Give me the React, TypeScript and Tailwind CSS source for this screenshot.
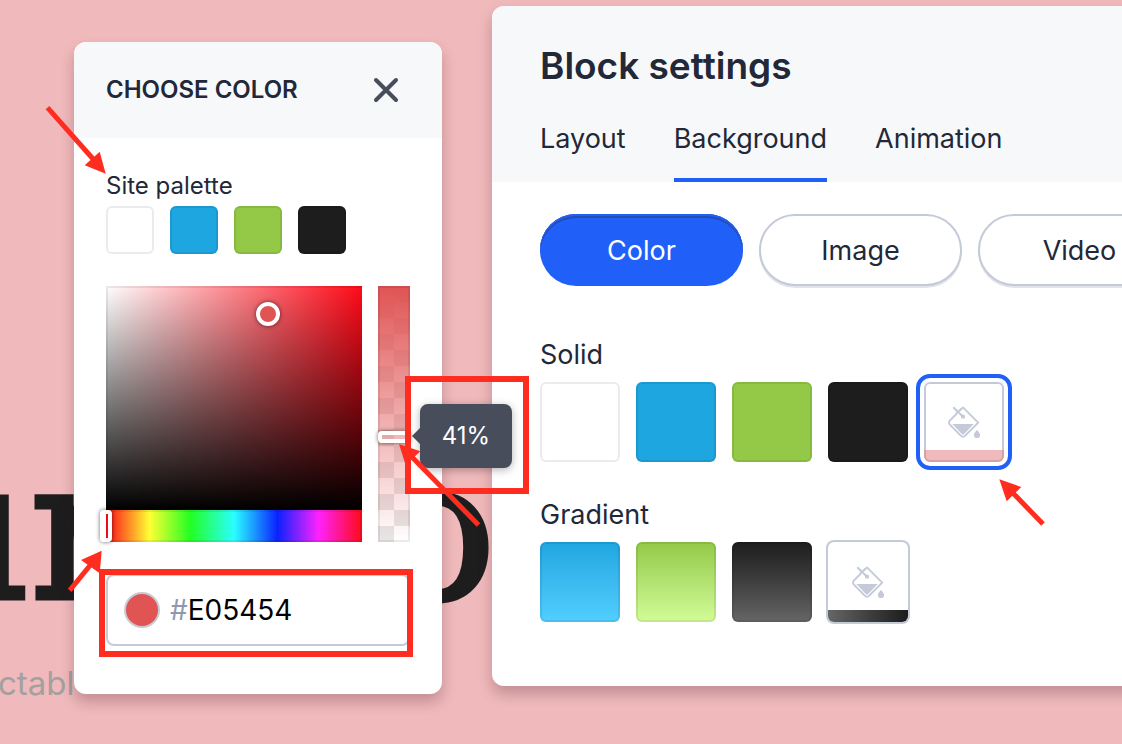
import { useState } from "react";

type Swatch = { name: string; fill: string };

const solids: Swatch[] = [
  { name: "White", fill: "bg-white" },
  { name: "Blue", fill: "bg-[#1ea6e0]" },
  { name: "Green", fill: "bg-[#93c947]" },
  { name: "Black", fill: "bg-[#1d1d1d]" },
];

const gradients: Swatch[] = [
  { name: "Blue gradient", fill: "bg-linear-to-b from-[#1ea6e0] to-[#52ceff]" },
  { name: "Green gradient", fill: "bg-linear-to-b from-[#93c947] to-[#d3fc97]" },
  { name: "Black gradient", fill: "bg-linear-to-b from-[#1d1d1d] to-[#666666]" },
];

const tabs = ["Layout", "Background", "Animation"];
const kinds = ["Color", "Image", "Video"];

function SwatchButton({ swatch, size }: { swatch: Swatch; size: string }) {
  return (
    <button
      type="button"
      aria-label={swatch.name}
      className={`shrink-0 rounded-md inset-ring-2 inset-ring-black/8 ${size} ${swatch.fill}`}
    />
  );
}

function BucketIcon() {
  return (
    <svg viewBox="0 0 34 34" className="size-[34px]" fill="none" aria-hidden="true">
      <path
        d="M16 2.4 31.2 17.6 18 30.9a2.8 2.8 0 0 1-4 0L2.9 19.700a2.900 2.900 0 0 1 0-4.200Z"
        stroke="#c4cad8"
        strokeWidth="1.9"
        strokeLinejoin="round"
      />
      <path d="M5.300 19h21.400L17.200 28.900a1.700 1.700 0 0 1-2.400 0Z" fill="#c4cad8" />
      <path d="M10.500 6.300 14.500 10.200" stroke="#fff" strokeWidth="3.600" />
      <path d="M8.800 8.500 14.500 3.800" stroke="#c4cad8" strokeWidth="1.900" />
      <path d="M6.300 2.300 16 11.700" stroke="#c4cad8" strokeWidth="2" />
      <circle cx="16" cy="11.700" r="2.100" fill="#c4cad8" />
      <path
        d="M30 24.800c1.600 2 3.100 3.500 3.100 5.200a3.100 3.100 0 0 1-6.200 0c0-1.700 1.500-3.200 3.100-5.200Z"
        fill="#c4cad8"
      />
    </svg>
  );
}

function BlockSettings() {
  const [tab, setTab] = useState("Background");
  const [kind, setKind] = useState("Color");
  return (
    <section className="mt-1.5 -mr-5 min-w-0 flex-1 overflow-hidden rounded-l-xl bg-white pb-16 shadow-[0_8px_14px_rgba(60,20,30,0.25)]">
      <header className="bg-[#f7f8fa] px-12 pt-9">
        <h2 className="text-[37px] leading-[48px] font-semibold whitespace-nowrap">Block settings</h2>
        <nav className="mt-[29px] flex gap-12">
          {tabs.map((t) => (
            <button
              key={t}
              type="button"
              onClick={() => setTab(t)}
              className={`border-b-4 pb-[19px] text-[27px] leading-10 ${
                t === tab ? "border-[#2060f8]" : "border-transparent"
              }`}
            >
              {t}
            </button>
          ))}
        </nav>
      </header>
      <div className="px-12 pt-8">
        <div className="flex gap-4">
          {kinds.map((k) => (
            <button
              key={k}
              type="button"
              onClick={() => setKind(k)}
              className={`h-18 w-[203px] shrink-0 rounded-full pt-0.5 text-[27px] ${
                k === kind
                  ? "bg-[#2060f8] text-white shadow-[inset_0_2px_0_#2060f8,inset_0_4px_0_#254cb0]"
                  : "border-2 border-[#c4cad8] bg-white shadow-[0_2px_0_#e2e4e8]"
              }`}
            >
              {k}
            </button>
          ))}
        </div>
        <h3 className="mt-[51px] text-[27px] leading-9">Solid</h3>
        <div className="mt-[9px] flex gap-4">
          {solids.map((s) => (
            <SwatchButton key={s.name} swatch={s} size="size-20" />
          ))}
          <button
            type="button"
            aria-label="Custom color"
            className="relative flex size-20 shrink-0 flex-col items-center justify-between overflow-hidden rounded-md bg-white inset-ring-2 inset-ring-[#c4cad8] outline-4 outline-offset-4 outline-[#2060f8]"
          >
            <span className="pt-[23px]">
              <BucketIcon />
            </span>
            <span className="h-3 w-full rounded-b-md border-x-2 border-b-2 border-black/12 bg-[#f0b9bb]" />
          </button>
        </div>
        <h3 className="mt-[35px] text-[27px] leading-9">Gradient</h3>
        <div className="mt-[9px] flex gap-4">
          {gradients.map((s) => (
            <SwatchButton key={s.name} swatch={s} size="size-20" />
          ))}
          <button
            type="button"
            aria-label="Custom gradient"
            className="flex size-20 shrink-0 flex-col items-center justify-between overflow-hidden rounded-md bg-white ring-2 ring-[#c4cad8]"
          >
            <span className="pt-[23px]">
              <BucketIcon />
            </span>
            <span className="h-3 w-full bg-linear-to-r from-[#666666] to-[#1d1d1d]" />
          </button>
        </div>
      </div>
    </section>
  );
}

function ColorPicker() {
  const [hex, setHex] = useState("E05454");
  const [hue, setHue] = useState(0);
  const [alpha, setAlpha] = useState(41);
  return (
    <section className="relative mt-[42px] w-[368px] shrink-0 rounded-xl bg-white pb-12 shadow-[0_8px_14px_rgba(60,20,30,0.25)]">
      <header className="flex h-24 items-center justify-between rounded-t-xl bg-[#f7f8fa] pr-[42px] pl-8">
        <h2 className="text-2xl font-semibold">CHOOSE COLOR</h2>
        <button type="button" aria-label="Close">
          <svg viewBox="0 0 28 28" className="size-7" aria-hidden="true">
            <path d="M4 4 24 24M24 4 4 24" stroke="#484d5c" strokeWidth="4" strokeLinecap="round" />
          </svg>
        </button>
      </header>
      <div className="px-8 pt-8">
        <h3 className="text-2xl leading-8">Site palette</h3>
        <div className="mt-1 flex gap-4">
          {solids.map((s) => (
            <SwatchButton key={s.name} swatch={s} size="size-12" />
          ))}
        </div>
        <div className="mt-8 flex gap-4">
          <div className="min-w-0 flex-1">
            <div
              role="slider"
              tabIndex={0}
              aria-label="Saturation and brightness"
              aria-valuenow={63}
              className="relative h-56 bg-[linear-gradient(to_top,#000,transparent),linear-gradient(to_right,#fff,#ff0a18)] shadow-[inset_2px_2px_0_rgba(0,0,0,0.08)]"
            >
              <span className="absolute top-4 left-[150px] size-6 rounded-full border-4 border-white bg-[#e05454] shadow-[0_0_4px_rgba(0,0,0,0.6)]" />
            </div>
            <div className="h-8 bg-[linear-gradient(to_right,#ff0a18,#ffff33_17%,#22ff22_33%,#2affff_50%,#0a22ff_67%,#ff22ff_83%,#ff0a18)] inset-ring-2 inset-ring-black/8">
              <input
                type="range"
                aria-label="Hue"
                min={0}
                max={360}
                value={hue}
                onChange={(e) => setHue(Number(e.target.value))}
                className="-ml-1.5 block h-8 w-[calc(100%+12px)] appearance-none bg-transparent [&::-webkit-slider-thumb]:h-8 [&::-webkit-slider-thumb]:w-3 [&::-webkit-slider-thumb]:appearance-none [&::-webkit-slider-thumb]:rounded-sm [&::-webkit-slider-thumb]:border-4 [&::-webkit-slider-thumb]:border-white [&::-webkit-slider-thumb]:shadow-[0_0_4px_rgba(0,0,0,0.6)]"
              />
            </div>
          </div>
          <div className="relative flex h-64 w-8 flex-col bg-[linear-gradient(to_bottom,#e05454,transparent),repeating-conic-gradient(#e6e6e6_0_25%,#fff_0_50%)] bg-size-[100%_100%,32px_32px] inset-ring-2 inset-ring-black/8">
            <input
              type="range"
              aria-label="Opacity"
              min={0}
              max={100}
              value={alpha}
              onChange={(e) => setAlpha(Number(e.target.value))}
              className="-mt-1.5 block h-[calc(100%+12px)] w-8 shrink-0 appearance-none bg-transparent [direction:rtl] [writing-mode:vertical-lr] [&::-webkit-slider-thumb]:h-3 [&::-webkit-slider-thumb]:w-8 [&::-webkit-slider-thumb]:appearance-none [&::-webkit-slider-thumb]:rounded-sm [&::-webkit-slider-thumb]:border-4 [&::-webkit-slider-thumb]:border-white [&::-webkit-slider-thumb]:shadow-[0_0_4px_rgba(0,0,0,0.6)]"
            />
            <output className="absolute top-[118px] left-[42px] z-10 flex h-16 w-[92px] items-center justify-center rounded-lg bg-[#484d5c] text-2xl text-white shadow-[0_2px_8px_rgba(0,0,0,0.3)]">
              <svg viewBox="0 0 8 16" className="absolute top-6 -left-2 h-4 w-2" aria-hidden="true">
                <path d="M8 0 0 8l8 8Z" fill="#484d5c" />
              </svg>
              {`${alpha}%`}
            </output>
          </div>
        </div>
        <label className="mt-8 flex h-18 items-center rounded-lg border-2 border-[#c4cad8] pl-4 text-[28px]">
          <span className="size-9 shrink-0 rounded-full border-2 border-[#c8ccd2] bg-[#e05454]" />
          <span className="ml-2.5 text-[#9098b0]">#</span>
          <input
            aria-label="Hex color"
            value={hex}
            onChange={(e) => setHex(e.target.value)}
            className="min-w-0 flex-1 bg-transparent text-black outline-none"
          />
        </label>
      </div>
    </section>
  );
}

function SiteCanvas() {
  return (
    <div
      className="absolute inset-0 overflow-hidden whitespace-nowrap text-[#1d1d1d]"
      aria-hidden="true"
    >
      <div className="font-['DejaVu_Serif',serif] text-[194px] leading-[200px] [-webkit-text-stroke:5px_#1d1d1d]">
        <p className="absolute top-[431px] right-[1092px]">u</p>
        <p className="absolute top-[431px] left-[30px]">r</p>
        <p className="absolute top-[431px] left-[379px]">o</p>
      </div>
      <p className="absolute top-[663px] left-[-2px] text-[33px] leading-10 text-[#a3a0a1]">ctabl</p>
    </div>
  );
}

function Annotations() {
  return (
    <div className="pointer-events-none absolute inset-0 z-20 overflow-hidden" aria-hidden="true">
      <div className="absolute top-[376px] left-[405px] h-[118px] w-[124px] border-6 border-[#ff2d20]" />
      <div className="absolute top-[569px] left-[99px] h-[88px] w-[314px] border-6 border-[#ff2d20]" />
      <svg className="absolute top-0 left-0 h-[744px] w-[1122px]" viewBox="0 0 1122 744" fill="#ff2d20">
        <g stroke="#ff2d20" strokeWidth="5">
          <path d="M47.500 107.700 94 160" />
          <path d="M478.500 525 410 455" />
          <path d="M69.700 590.300 92 563" />
          <path d="M1043 524 1010 490" />
        </g>
        <path d="M105.700 173.700 99.700 151.700 84.700 165.300Z" />
        <path d="M399 444 420.300 451.300 405.700 465.300Z" />
        <path d="M101.700 550.700 81 560 99.700 573.300Z" />
        <path d="M999.300 479.300 1021.300 487 1006.700 501.300Z" />
      </svg>
    </div>
  );
}

export default function App() {
  return (
    <main className="relative min-h-screen overflow-hidden bg-[#f0b9bb] font-[Inter,'Liberation_Sans',sans-serif] text-[#222838]">
      <SiteCanvas />
      <div className="relative flex items-start gap-[50px] pl-[74px]">
        <ColorPicker />
        <BlockSettings />
      </div>
      <Annotations />
    </main>
  );
}
